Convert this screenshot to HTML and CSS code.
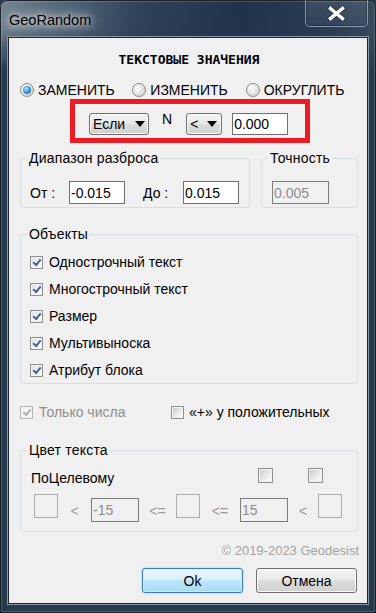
FILE: index.html
```html
<!DOCTYPE html>
<html lang="ru">
<head>
    <meta charset="UTF-8">
    <meta name="viewport" content="width=device-width, initial-scale=1.0">
    <title>GeoRandom</title>
    <link rel="stylesheet" href="styles.css">
</head>
<body>

<div class="window">
    <div class="titlebar">
        <span class="title">GeoRandom</span>
        <div class="close-btn">
            <svg width="19" height="15" viewBox="0 0 19 15">
                <path d="M3.5 2.5 L15.5 12.5 M15.5 2.5 L3.5 12.5" stroke="#2e3a48" stroke-width="5.5" stroke-linecap="square" fill="none"/>
                <path d="M3.5 2.5 L15.5 12.5 M15.5 2.5 L3.5 12.5" stroke="#ffffff" stroke-width="3.4" stroke-linecap="square" fill="none"/>
            </svg>
        </div>
    </div>

    <div class="client">
        <div class="heading">ТЕКСТОВЫЕ ЗНАЧЕНИЯ</div>

        <div class="modes">
            <label class="mode"><span class="radio on"></span>ЗАМЕНИТЬ</label>
            <label class="mode mode-mid"><span class="radio"></span>ИЗМЕНИТЬ</label>
            <label class="mode"><span class="radio"></span>ОКРУГЛИТЬ</label>
        </div>

        <div class="condition">
            <div class="combo combo-if"><span>Если</span><span class="arrow"></span></div>
            <span class="cond-n">N</span>
            <div class="combo combo-op"><span>&lt;</span><span class="arrow"></span></div>
            <input type="text" class="field field-value" value="0.000">
        </div>

        <div class="ranges">
            <fieldset class="group group-range">
                <legend>Диапазон разброса</legend>
                <div class="range-row">
                    <span class="lbl">От :</span>
                    <input type="text" class="field field-range" value="-0.015">
                    <span class="lbl lbl-to">До :</span>
                    <input type="text" class="field field-range" value="0.015">
                </div>
            </fieldset>
            <fieldset class="group group-prec">
                <legend>Точность</legend>
                <div class="range-row prec-row">
                    <input type="text" class="field field-off field-prec" value="0.005" disabled>
                </div>
            </fieldset>
        </div>

        <fieldset class="group objects">
            <legend>Объекты</legend>
            <div class="object-list">
                <label class="check-row"><span class="check on"></span>Однострочный текст</label>
                <label class="check-row"><span class="check on"></span>Многострочный текст</label>
                <label class="check-row"><span class="check on"></span>Размер</label>
                <label class="check-row"><span class="check on"></span>Мультивыноска</label>
                <label class="check-row"><span class="check on"></span>Атрибут блока</label>
            </div>
        </fieldset>

        <div class="options">
            <label class="check-row opt-num"><span class="check on dim"></span>Только числа</label>
            <label class="check-row opt-plus"><span class="check"></span>«+» у положительных</label>
        </div>

        <fieldset class="group colors">
            <legend>Цвет текста</legend>
            <div class="color-head">
                <span class="target">ПоЦелевому</span>
                <span class="check big"></span>
                <span class="check big second"></span>
            </div>
            <div class="color-range">
                <span class="swatch"></span>
                <span class="rel rel-a">&lt;</span>
                <input type="text" class="field field-off field-bound" value="-15" disabled>
                <span class="rel rel-b">&lt;=</span>
                <span class="swatch"></span>
                <span class="rel rel-c">&lt;=</span>
                <input type="text" class="field field-off field-bound" value="15" disabled>
                <span class="rel rel-d">&lt;</span>
                <span class="swatch"></span>
            </div>
        </fieldset>

        <div class="copyright">© 2019-2023 Geodesist</div>

        <div class="buttons">
            <button class="btn btn-ok">Ok</button>
            <button class="btn">Отмена</button>
        </div>
    </div>
</div>

</body>
</html>
```

FILE: styles.css
```css
body {
    margin: 0;
    font-family: "Liberation Sans", Arial, sans-serif;
    font-size: 14px;
    color: #000;
    background-color: #283a4e;
}

.window {
    width: 376px;
    height: 613px;
    box-sizing: border-box;
    padding: 0 8px 9px;
    border-radius: 7px 7px 0 0;
    display: flex;
    flex-direction: column;
    background:
        linear-gradient(to bottom, rgba(40, 58, 78, 0) 0, rgba(40, 58, 78, 0) 28px, #283a4e 70px),
        linear-gradient(100deg, #74838f 0%, #56677a 12%, #2e4157 30%, #21334a 50%, #2a3d53 70%, #4b5b6d 88%, #69767f 100%);
    box-shadow: inset 0 0 0 1px #18222d, inset 0 0 0 2px rgba(255, 255, 255, 0.16);
}

/* title bar */
.titlebar {
    height: 37px;
    flex-shrink: 0;
    display: flex;
    justify-content: space-between;
    align-items: flex-start;
}

.title {
    margin: 12px 0 0 1px;
    line-height: 16px;
    font-size: 14.5px;
    text-shadow: 0 0 6px rgba(255, 255, 255, 0.9), 0 0 12px rgba(255, 255, 255, 0.7), 0 0 18px rgba(255, 255, 255, 0.5);
}

.close-btn {
    width: 63px;
    height: 27px;
    box-sizing: border-box;
    border: 1px solid rgba(200, 212, 224, 0.55);
    border-top: none;
    border-radius: 0 0 5px 5px;
    background: linear-gradient(rgba(255, 255, 255, 0.1), rgba(255, 255, 255, 0.04));
    box-shadow: inset 0 0 0 1px rgba(0, 0, 0, 0.25);
    display: flex;
    align-items: center;
    justify-content: center;
}

/* client area */
.client {
    flex: 1;
    background-color: #f0f0f0;
    border: 1px solid #1c2834;
    box-shadow: 0 0 0 1px #8796a5;
    padding: 13px 9px 0 11px;
    display: flex;
    flex-direction: column;
}

.heading {
    font-family: "DejaVu Sans Mono", "Liberation Mono", monospace;
    font-weight: bold;
    font-size: 13px;
    line-height: 18px;
    text-align: center;
}

.modes {
    display: flex;
    align-items: center;
    height: 18px;
    margin-top: 12px;
}

.mode {
    display: flex;
    align-items: center;
    gap: 4px;
    width: 113px;
}

.mode-mid {
    width: 114px;
}

.radio {
    width: 14px;
    height: 14px;
    box-sizing: border-box;
    border-radius: 50%;
    border: 1px solid #8a8a8a;
    background: radial-gradient(circle at 35% 35%, #fdfdfd, #dedede 65%, #c6c6c6);
    display: flex;
    align-items: center;
    justify-content: center;
    flex-shrink: 0;
}

.radio.on::after {
    content: "";
    width: 8px;
    height: 8px;
    border-radius: 50%;
    background: radial-gradient(circle at 40% 35%, #c4ecff 0, #4aa3e0 40%, #0b4e90 100%);
}

/* red condition box */
.condition {
    align-self: flex-start;
    margin-left: 50px;
    width: 240px;
    height: 44px;
    box-sizing: border-box;
    border: 5px solid #ed1c24;
    padding: 9px 0 0 14px;
    display: flex;
    align-items: flex-start;
}

.combo {
    height: 22px;
    box-sizing: border-box;
    border: 1px solid #707070;
    border-radius: 3px;
    background: linear-gradient(#f2f2f2 0%, #ebebeb 45%, #dddddd 50%, #cfcfcf 100%);
    box-shadow: inset 0 0 0 1px #fbfbfb;
    display: flex;
    align-items: center;
    justify-content: space-between;
    padding: 0 3px 0 3px;
}

.combo-if {
    width: 60px;
}

.combo-op {
    width: 36px;
    margin-left: 14px;
    padding-right: 4px;
}

.arrow {
    width: 0;
    height: 0;
    border-left: 5px solid transparent;
    border-right: 5px solid transparent;
    border-top: 6px solid #000;
}

.cond-n {
    margin: -2px 0 0 13px;
    line-height: 16px;
}

.field {
    height: 22px;
    box-sizing: border-box;
    border: 1px solid #6f6f6f;
    background-color: #fff;
    font: inherit;
    color: #000;
    padding: 0 1px;
    margin: 0;
    outline: none;
}

.field-value {
    width: 56px;
    margin-left: 10px;
}

.field-off {
    background-color: #f0f0f0;
    color: #8d8d8d;
    border-color: #7d7d7d;
}

/* group boxes */
.group {
    margin: 0;
    padding: 0;
    min-width: 0;
    border: 1px solid #d5dfe5;
    border-radius: 3px;
}

.group legend {
    margin-left: 6px;
    padding: 0 2px;
    line-height: 16px;
    letter-spacing: 0.2px;
}

.ranges {
    display: flex;
    gap: 11px;
    margin-top: 7px;
}

.group-range {
    width: 230px;
    box-sizing: border-box;
}

.group-prec {
    flex: 1;
}

.range-row {
    display: flex;
    align-items: center;
    padding: 15px 0 3px 9px;
}

.prec-row {
    padding-left: 10px;
}

.lbl {
    width: 39px;
}

.lbl-to {
    width: 40px;
    margin-left: 18px;
}

.field-range {
    width: 56px;
    height: 23px;
}

.field-prec {
    width: 57px;
    height: 23px;
}

.objects {
    margin-top: 18px;
}

.object-list {
    display: flex;
    flex-direction: column;
    gap: 9px;
    padding: 11px 0 4px 9px;
}

.check-row {
    display: flex;
    align-items: center;
    gap: 6px;
    height: 18px;
}

.check {
    width: 13px;
    height: 13px;
    box-sizing: border-box;
    border: 1px solid #8e8f8f;
    background: linear-gradient(135deg, #c3c7cc 0%, #e9eaec 55%, #ffffff 100%);
    box-shadow: inset 0 0 0 1px #f4f4f4;
    display: flex;
    align-items: center;
    justify-content: center;
    flex-shrink: 0;
}

.check.on {
    background: linear-gradient(135deg, #dfe2e8 0%, #f2f3f5 60%, #ffffff 100%);
}

.check.on::after {
    content: "";
    width: 6px;
    height: 3px;
    border-left: 2px solid #4a5e9b;
    border-bottom: 2px solid #4a5e9b;
    transform: translate(0, -1px) rotate(-50deg);
}

.check.dim {
    border-color: #b4b4b4;
    background: #f4f4f4;
}

.check.dim::after {
    border-color: #b0b0b0;
}

.options {
    display: flex;
    margin-top: 19px;
}

.opt-num {
    width: 151px;
    color: #8d8d8d;
}

.opt-plus {
    gap: 5px;
}

/* text colour group */
.colors {
    margin-top: 21px;
}

.color-head {
    display: flex;
    align-items: flex-start;
    padding: 9px 0 0 10px;
}

.target {
    width: 227px;
    line-height: 18px;
    margin-top: 2px;
}

.check.big {
    width: 15px;
    height: 15px;
    margin-top: 1px;
}

.check.second {
    margin-left: 35px;
}

.color-range {
    display: flex;
    align-items: flex-start;
    padding: 7px 0 9px 13px;
}

.swatch {
    width: 24px;
    height: 24px;
    box-sizing: border-box;
    border: 1px solid #adadad;
}

.rel {
    line-height: 16px;
    margin-top: 9px;
    text-align: center;
    color: #9a9a9a;
}

.rel-a { width: 33px; }
.rel-b { width: 37px; }
.rel-c { width: 40px; }
.rel-d { width: 30px; }

.field-bound {
    width: 48px;
    height: 24px;
    margin-top: 4px;
}

.copyright {
    margin: 11px -1px 0 0;
    line-height: 16px;
    font-size: 13px;
    text-align: right;
    color: #a3a3a3;
}

.buttons {
    display: flex;
    justify-content: flex-end;
    gap: 13px;
    margin-top: 9px;
    padding-right: 1px;
}

.btn {
    width: 101px;
    height: 25px;
    box-sizing: border-box;
    border: 1px solid #707070;
    border-radius: 3px;
    background: linear-gradient(#f2f2f2 0%, #ebebeb 45%, #dddddd 50%, #cfcfcf 100%);
    box-shadow: inset 0 0 0 1px #fcfcfc;
    font: inherit;
    color: #000;
    padding: 0;
}

.btn-ok {
    border-color: #3c7fb1;
    background: linear-gradient(#eaf6fd 0%, #d9f0fc 45%, #bee6fd 50%, #a7d9f5 100%);
    box-shadow: inset 0 0 0 1px #cdeefe, 0 0 2px rgba(60, 160, 220, 0.6);
}
```
